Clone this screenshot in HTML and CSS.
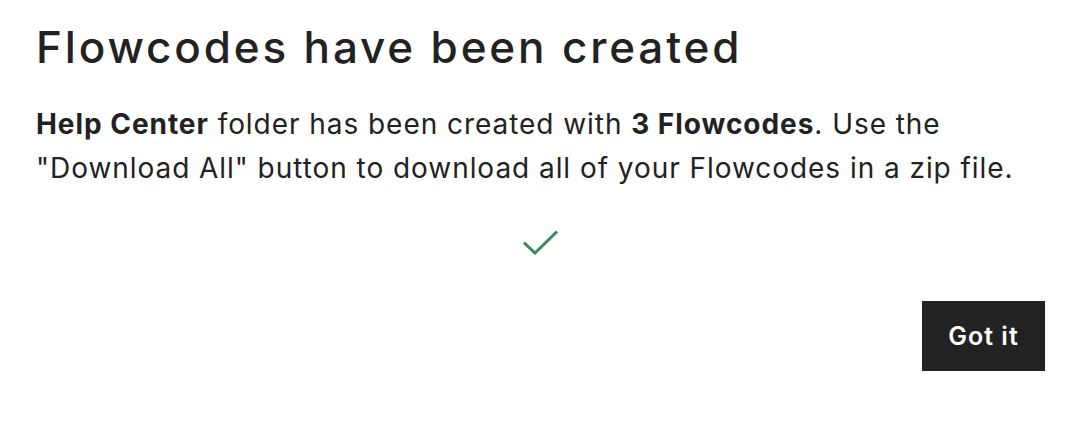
FILE: index.html
```html
<!DOCTYPE html>
<html lang="en">
<head>
  <meta charset="UTF-8" />
  <meta name="viewport" content="width=device-width, initial-scale=1.0" />
  <title>Flowcodes created</title>
  <link rel="stylesheet" href="styles.css">
</head>
<body>
  <div class="modal">
    <h1 class="modal-title">Flowcodes have been created</h1>
    <p class="modal-text">
      <strong>Help Center</strong> folder has been created with <strong>3 Flowcodes</strong>. Use the
      "Download All" button to download all of your Flowcodes in a zip file.
    </p>
    <div class="check">
      <svg width="36" height="26" viewBox="0 0 36 26" fill="none">
        <path d="M2 13.5 L12 23 L33 2.5" stroke="#3c8a5c" stroke-width="3" stroke-linecap="square"/>
      </svg>
    </div>
    <div class="actions">
      <button class="got-it">Got it</button>
    </div>
  </div>
</body>
</html>
```

FILE: styles.css
```css
html, body {
  margin: 0;
  padding: 0;
  background: #ffffff;
  font-family: Inter, 'Noto Sans', sans-serif;
  color: #222222;
}
.modal {
  padding: 20px 29px 40px 36px;
}
.modal-title {
  margin: 0;
  font-family: Inter, sans-serif;
  font-weight: 500;
  font-size: 44px;
  line-height: 54px;
  letter-spacing: 2.85px;
  color: #222222;
}
.modal-text {
  margin: 28px 0 0;
  font-size: 28px;
  line-height: 44px;
  letter-spacing: 0.95px;
  color: #222222;
  max-width: 980px;
}
.modal-text strong {
  font-weight: 700;
}
.check {
  display: flex;
  justify-content: center;
  margin-top: 40px;
}
.actions {
  display: flex;
  justify-content: flex-end;
  margin-top: 45px;
}
.got-it {
  background: #222222;
  color: #ffffff;
  border: none;
  font-family: Inter, sans-serif;
  font-weight: 600;
  font-size: 25px;
  letter-spacing: 1px;
  width: 123px;
  height: 70px;
  cursor: pointer;
}
```
